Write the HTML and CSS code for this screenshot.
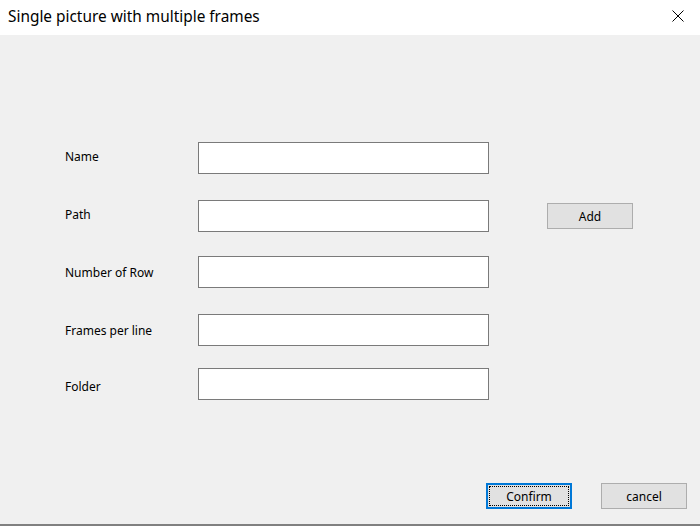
FILE: index.html
```html
<!DOCTYPE html>
<html>
<head>
<meta charset="utf-8">
<link rel="stylesheet" href="styles.css">
</head>
<body>
<div class="window">
  <div class="titlebar">
    <span class="title">Single picture with multiple frames</span>
    <svg class="close" width="12" height="12" viewBox="0 0 12 12"><path d="M0.5 0.5 L11.5 11.5 M11.5 0.5 L0.5 11.5" stroke="#000" stroke-width="1" fill="none"/></svg>
  </div>
  <div class="content">
    <div class="form">
      <div class="row r1"><label class="lbl">Name</label><div class="input"></div></div>
      <div class="row r2"><label class="lbl">Path</label><div class="input"></div><button class="btn add">Add</button></div>
      <div class="row r3"><label class="lbl">Number of Row</label><div class="input"></div></div>
      <div class="row r4"><label class="lbl">Frames per line</label><div class="input"></div></div>
      <div class="row r5"><label class="lbl">Folder</label><div class="input"></div></div>
    </div>
    <div class="footer">
      <button class="btn confirm"><span class="focus">Confirm</span></button>
      <button class="btn cancel">cancel</button>
    </div>
  </div>
</div>
</body>
</html>
```
FILE: styles.css
```css
html, body { margin: 0; padding: 0; }
body {
  width: 700px; height: 526px; overflow: hidden;
  font-family: "Noto Sans", "Liberation Sans", sans-serif;
  color: #000;
  background: #f0f0f0;
}
.window { display: flex; flex-direction: column; height: 526px; }
.titlebar {
  height: 35px; background: #fff;
  display: flex; align-items: center; justify-content: space-between;
  padding: 0 16px 0 8px; box-sizing: border-box;
}
.title { font-size: 15.4px; line-height: 20px; margin-top: -2px; }
.close { margin-top: -4px; }
.content {
  flex: 1; display: flex; flex-direction: column;
  border-bottom: 2px solid #808080;
}
.form { padding: 107px 0 0 65px; display: flex; flex-direction: column; }
.row { display: flex; align-items: center; height: 32px; }
.r2 { margin-top: 26px; }
.r3 { margin-top: 24px; }
.r4 { margin-top: 26px; }
.r5 { margin-top: 22px; }
.lbl { width: 133px; font-size: 12px; line-height: 16px; margin-top: -2px; }
.r3 .lbl, .r4 .lbl { margin-top: 2px; }
.r5 .lbl { margin-top: 6px; }
.input {
  width: 291px; height: 32px; box-sizing: border-box;
  background: #fff; border: 1px solid #7a7a7a;
}
.btn {
  font-family: inherit; font-size: 12px; color: #000;
  width: 86px; height: 26px; box-sizing: border-box;
  background: #e1e1e1; border: 1px solid #adadad; padding: 0;
}
.add { margin-left: 58px; }
.footer {
  margin-top: auto; display: flex; justify-content: flex-end; gap: 29px;
  padding: 0 13px 15px 0;
}
.confirm { border: 2px solid #0078d7; padding: 1px; display: flex; }
.focus { flex: 1; border: 1px dotted #000; display: flex; align-items: center; justify-content: center; }
```
